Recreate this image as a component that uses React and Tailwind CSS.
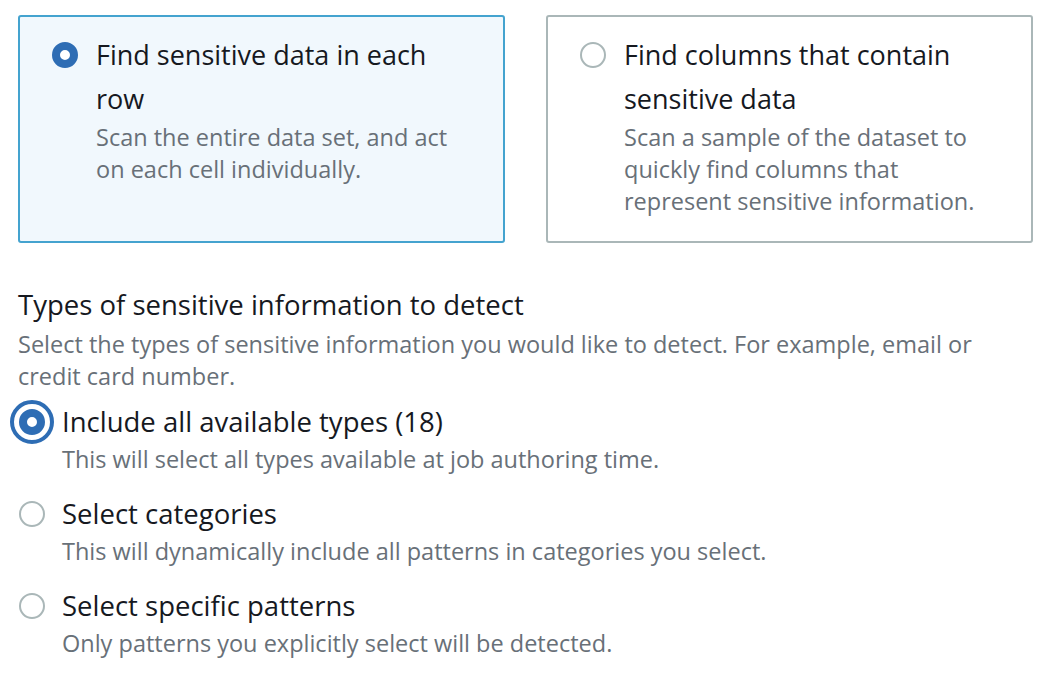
import React from 'react';

function Radio({ checked, focused }) {
  if (checked) {
    return (
      <span className={`flex items-center justify-center rounded-full ${focused ? 'w-[44px] h-[44px] border-[4px] border-[#2e6db4]' : 'w-[26px] h-[26px]'}`}>
        <span className="w-[26px] h-[26px] rounded-full border-[8px] border-[#2e6db4] bg-white block" />
      </span>
    );
  }
  return <span className="block w-[26px] h-[26px] rounded-full border-[2px] border-[#aab7b8] bg-white" />;
}

function ModeCard({ checked, title, description }) {
  return (
    <div
      className={`flex gap-[18px] pl-[32px] pr-[40px] pt-[16px] pb-[24px] rounded-[3px] border-2 ${
        checked ? 'border-[#44a3cf] bg-[#f1f8fd]' : 'border-[#aab7b8] bg-white'
      }`}
    >
      <div className="h-[44px] flex items-center shrink-0">
        <Radio checked={checked} />
      </div>
      <div>
        <p className="text-[27px] leading-[44px] text-[#16191f]">{title}</p>
        <p className="text-[23.5px] leading-[32px] text-[#687078]">{description}</p>
      </div>
    </div>
  );
}

const options = [
  { label: 'Include all available types (18)', desc: 'This will select all types available at job authoring time.', checked: true },
  { label: 'Select categories', desc: 'This will dynamically include all patterns in categories you select.' },
  { label: 'Select specific patterns', desc: 'Only patterns you explicitly select will be detected.' },
];

export default function App() {
  return (
    <div className="min-h-screen bg-white pl-[18px] pr-[25px] pt-[15px]" style={{ fontFamily: '"Open Sans", Arial, sans-serif' }}>
      <div className="grid grid-cols-2 gap-[41px]">
        <ModeCard
          checked
          title="Find sensitive data in each row"
          description="Scan the entire data set, and act on each cell individually."
        />
        <ModeCard
          title="Find columns that contain sensitive data"
          description="Scan a sample of the dataset to quickly find columns that represent sensitive information."
        />
      </div>

      <div className="mt-[42px]">
        <h2 className="text-[27.5px] leading-[40px] text-[#16191f]">Types of sensitive information to detect</h2>
        <p className="mt-[3px] pr-[40px] text-[23.5px] leading-[32px] text-[#687078]">
          Select the types of sensitive information you would like to detect. For example, email or credit card number.
        </p>

        <div className="mt-[9px] flex flex-col gap-[18px]">
          {options.map((o) => (
            <div key={o.label} className="flex">
              <div className="w-[44px] h-[42px] -ml-[8px] mr-[8px] flex items-center justify-center shrink-0">
                <Radio checked={o.checked} focused={o.checked} />
              </div>
              <div>
                <p className="text-[27.5px] leading-[42px] text-[#16191f]">{o.label}</p>
                <p className="text-[23.5px] leading-[32px] text-[#687078]">{o.desc}</p>
              </div>
            </div>
          ))}
        </div>
      </div>
    </div>
  );
}
